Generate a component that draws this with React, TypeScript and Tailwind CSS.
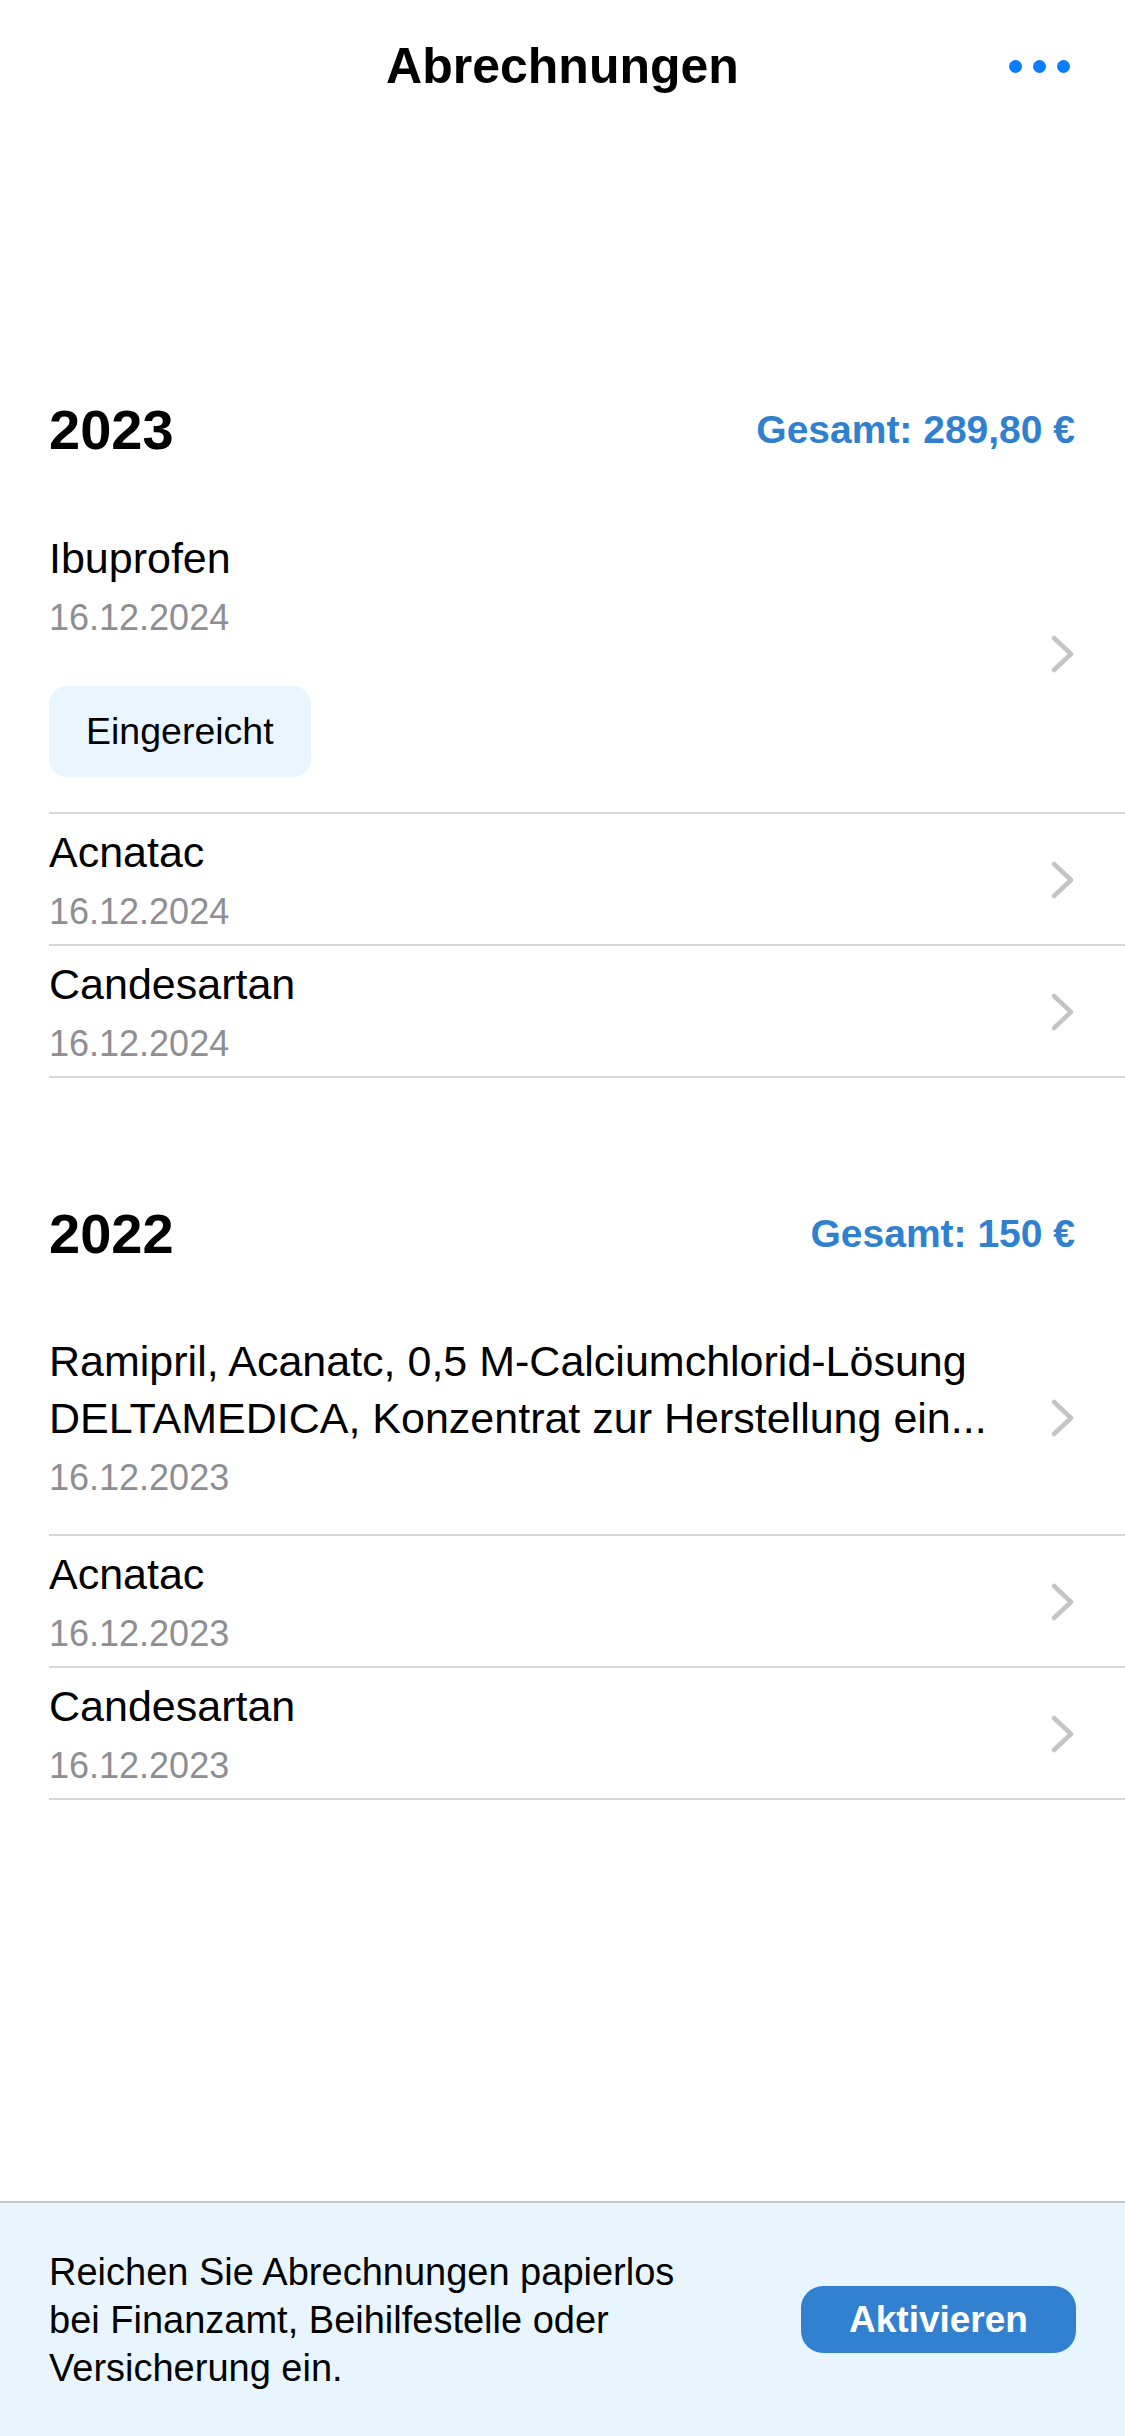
import React from 'react';

type Item = {
  title: string[];
  date: string;
  status?: string;
  first?: boolean;
};

type Section = {
  year: string;
  total: string;
  items: Item[];
};

const sections: Section[] = [
  {
    year: '2023',
    total: 'Gesamt: 289,80 €',
    items: [
      { title: ['Ibuprofen'], date: '16.12.2024', status: 'Eingereicht', first: true },
      { title: ['Acnatac'], date: '16.12.2024' },
      { title: ['Candesartan'], date: '16.12.2024' },
    ],
  },
  {
    year: '2022',
    total: 'Gesamt: 150 €',
    items: [
      {
        title: [
          'Ramipril, Acanatc, 0,5 M-Calciumchlorid-Lösung',
          'DELTAMEDICA, Konzentrat zur Herstellung ein...',
        ],
        date: '16.12.2023',
        first: true,
      },
      { title: ['Acnatac'], date: '16.12.2023' },
      { title: ['Candesartan'], date: '16.12.2023' },
    ],
  },
];

const Chevron = () => (
  <svg width="24" height="38" viewBox="0 0 24 38" fill="none" className="shrink-0">
    <polyline
      points="3,3 20,19 3,35"
      stroke="#c4c4c7"
      strokeWidth="4.5"
      strokeLinecap="round"
      strokeLinejoin="round"
    />
  </svg>
);

const Row = ({ item }: { item: Item }) => {
  const pad = item.first
    ? item.status
      ? 'pt-[32px] pb-[35px]'
      : 'pt-[31px] pb-[32px]'
    : 'pt-[10px] pb-[8px]';
  return (
    <div className="pl-[49px]">
      <div className={`flex items-center border-b-2 border-[#d6d6d9] pr-[50px] ${pad}`}>
        <div className="flex-1 min-w-0">
          {item.title.map((line) => (
            <div key={line} className="text-[43px] leading-[57px] text-black whitespace-nowrap">
              {line}
            </div>
          ))}
          <div className="mt-[7px] text-[36px] leading-[48px] text-[#8e8e93]">{item.date}</div>
          {item.status && (
            <div className="mt-[44px] inline-flex h-[91px] items-center rounded-[18px] bg-[#eaf6ff] px-[37px] text-[37.5px] text-black">
              {item.status}
            </div>
          )}
        </div>
        <Chevron />
      </div>
    </div>
  );
};

export default function App() {
  return (
    <div
      className="flex min-h-[2436px] w-[1125px] flex-col bg-white"
      style={{ fontFamily: '"Liberation Sans", Arial, sans-serif' }}
    >
      {/* nav bar */}
      <div className="grid h-[132px] grid-cols-[1fr_auto_1fr] items-center">
        <div />
        <div className="text-[50px] font-bold text-black">Abrechnungen</div>
        <div className="flex justify-end gap-[11px] pr-[55px]">
          <span className="h-[13px] w-[13px] rounded-full bg-[#0a7cff]" />
          <span className="h-[13px] w-[13px] rounded-full bg-[#0a7cff]" />
          <span className="h-[13px] w-[13px] rounded-full bg-[#0a7cff]" />
        </div>
      </div>

      <div className="flex flex-col">
        {sections.map((s, i) => (
          <div key={s.year} className={i === 0 ? 'mt-[268px]' : 'mt-[126px]'}>
            <div className="mb-[38px] flex h-[60px] items-center justify-between pl-[49px] pr-[50px]">
              <div className="text-[56px] font-bold text-black">{s.year}</div>
              <div className="text-[39px] font-bold text-[#2f81d0]">{s.total}</div>
            </div>
            {s.items.map((it, j) => (
              <Row key={j} item={it} />
            ))}
          </div>
        ))}
      </div>

      <div className="flex-1" />

      {/* bottom banner */}
      <div className="flex h-[235px] items-center justify-between border-t-2 border-[#c3c7cc] bg-[#e9f5fd] pl-[49px] pr-[49px]">
        <div className="w-[650px] text-[38px] leading-[48px] text-black">
          Reichen Sie Abrechnungen papierlos bei Finanzamt, Beihilfestelle oder Versicherung ein.
        </div>
        <button className="flex h-[67px] w-[275px] items-center justify-center rounded-[22px] bg-[#3281d0] text-[37px] font-bold text-white">
          Aktivieren
        </button>
      </div>
    </div>
  );
}
